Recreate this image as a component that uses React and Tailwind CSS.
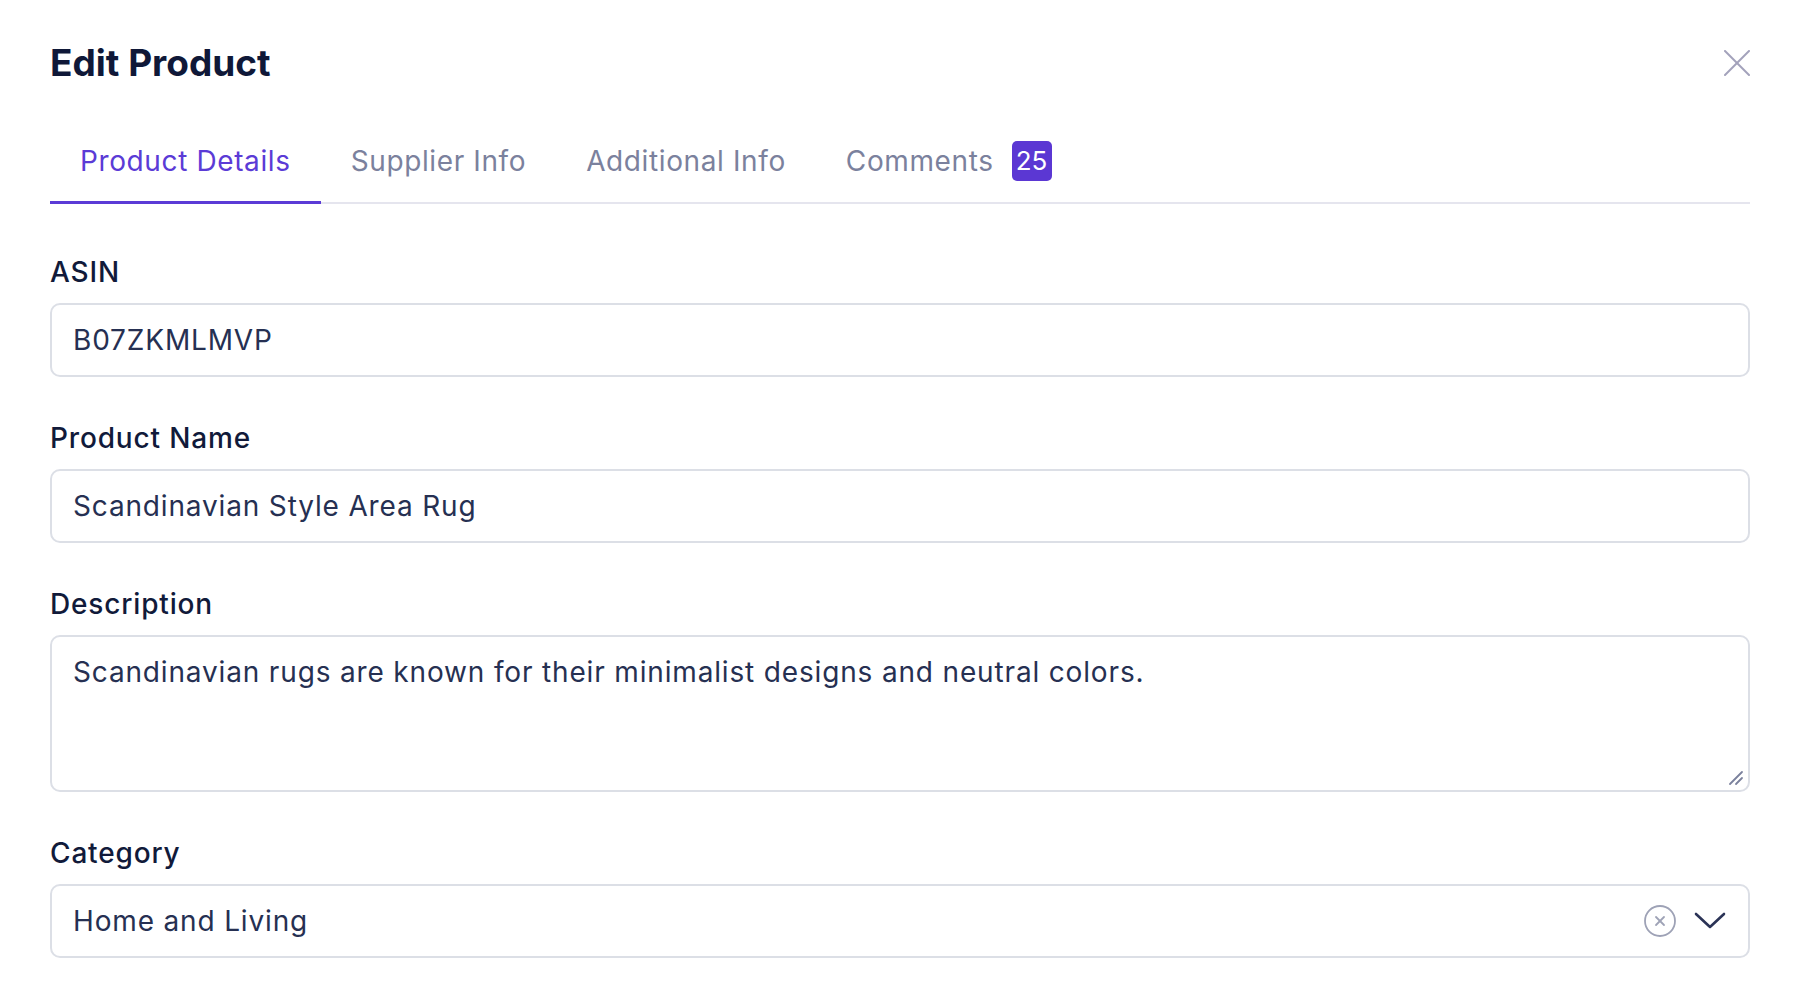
import React, { useState } from 'react';

const font = { fontFamily: 'Inter, "Noto Sans", sans-serif' };

const tabs = [
  { id: 'details', label: 'Product Details' },
  { id: 'supplier', label: 'Supplier Info' },
  { id: 'additional', label: 'Additional Info' },
  { id: 'comments', label: 'Comments', badge: 25 },
];

// Field wrapper: label + control
const Field = ({ label, children }) => (
  <div className="flex flex-col gap-[13px]">
    <label className="text-[28px] leading-[36px] tracking-[0.03em] font-medium text-[#111a3a]">{label}</label>
    {children}
  </div>
);

const CloseIcon = () => (
  <svg width="26" height="26" viewBox="0 0 26 26" fill="none" stroke="#a3a2bb" strokeWidth="2" strokeLinecap="round">
    <path d="M1 1 25 25" />
    <path d="M25 1 1 25" />
  </svg>
);

const ClearIcon = () => (
  <svg width="34" height="34" viewBox="0 0 34 34" fill="none" stroke="#9ea2b6" strokeWidth="1.8" strokeLinecap="round">
    <circle cx="17" cy="17" r="15" />
    <path d="M13 13 21 21" />
    <path d="M21 13 13 21" />
  </svg>
);

const ChevronIcon = () => (
  <svg width="32" height="18" viewBox="0 0 32 18" fill="none" stroke="#2b3356" strokeWidth="2.6" strokeLinecap="round" strokeLinejoin="round">
    <path d="M2 2 16 15 30 2" />
  </svg>
);

// Resize grip drawn over the textarea corner
const GripIcon = () => (
  <svg width="16" height="16" viewBox="0 0 16 16" fill="none" stroke="#7b819d" strokeWidth="1.8" strokeLinecap="round">
    <path d="M14 2 2 14" />
    <path d="M14 8 8 14" />
  </svg>
);

export default function App() {
  const [activeTab, setActiveTab] = useState('details');
  const [form, setForm] = useState({
    asin: 'B07ZKMLMVP',
    name: 'Scandinavian Style Area Rug',
    description: 'Scandinavian rugs are known for their minimalist designs and neutral colors.',
    category: 'Home and Living',
  });

  const handleChange = (e) => {
    const { name, value } = e.target;
    setForm(prev => ({ ...prev, [name]: value }));
  };

  const inputClass =
    'w-full h-[74px] rounded-[10px] border-2 border-[#dcdfe6] bg-white px-[21px] text-[28px] tracking-[0.03em] text-[#263052] outline-none';

  return (
    <div className="w-full min-h-[998px] bg-white px-[50px] pt-[38px]" style={font}>
      {/* Header */}
      <div className="flex items-center justify-between h-[50px]">
        <h1 className="text-[37px] leading-[50px] font-bold text-[#0f1838]">Edit Product</h1>
        <button className="flex items-center justify-center">
          <CloseIcon />
        </button>
      </div>

      {/* Tabs */}
      <div className="mt-[32px] flex border-b-2 border-[#e5e5ee]">
        {tabs.map(tab => (
          <button
            key={tab.id}
            onClick={() => setActiveTab(tab.id)}
            className={`h-[84px] -mb-[2px] px-[30px] flex items-center gap-[18px] border-b-[3px] text-[28px] tracking-[0.022em] ${
              activeTab === tab.id
                ? 'border-[#5b3bd6] text-[#5b3bd6]'
                : 'border-transparent text-[#7b819d]'
            }`}
          >
            {tab.label}
            {tab.badge && (
              <span className="w-[40px] h-[40px] rounded-[5px] bg-[#5b37d3] text-white text-[26px] tracking-normal flex items-center justify-center">
                {tab.badge}
              </span>
            )}
          </button>
        ))}
      </div>

      {/* Form */}
      <div className="mt-[50px] flex flex-col gap-[43px]">
        <Field label="ASIN">
          <input name="asin" value={form.asin} onChange={handleChange} className={inputClass} />
        </Field>
        <Field label="Product Name">
          <input name="name" value={form.name} onChange={handleChange} className={inputClass} />
        </Field>
        <Field label="Description">
          <div className="relative">
            <textarea
              name="description"
              value={form.description}
              onChange={handleChange}
              className="block w-full h-[157px] resize-none rounded-[10px] border-2 border-[#dcdfe6] bg-white px-[21px] pt-[17px] text-[28px] leading-[36px] tracking-[0.03em] text-[#263052] outline-none"
            />
            <span className="absolute right-[6px] bottom-[6px] pointer-events-none">
              <GripIcon />
            </span>
          </div>
        </Field>
        <Field label="Category">
          <div className="w-full h-[74px] rounded-[10px] border-2 border-[#dcdfe6] bg-white pl-[21px] pr-[22px] flex items-center">
            <span className="flex-1 text-[28px] tracking-[0.03em] text-[#263052]">{form.category}</span>
            <div className="flex items-center gap-[17px]">
              <ClearIcon />
              <ChevronIcon />
            </div>
          </div>
        </Field>
      </div>
    </div>
  );
}
